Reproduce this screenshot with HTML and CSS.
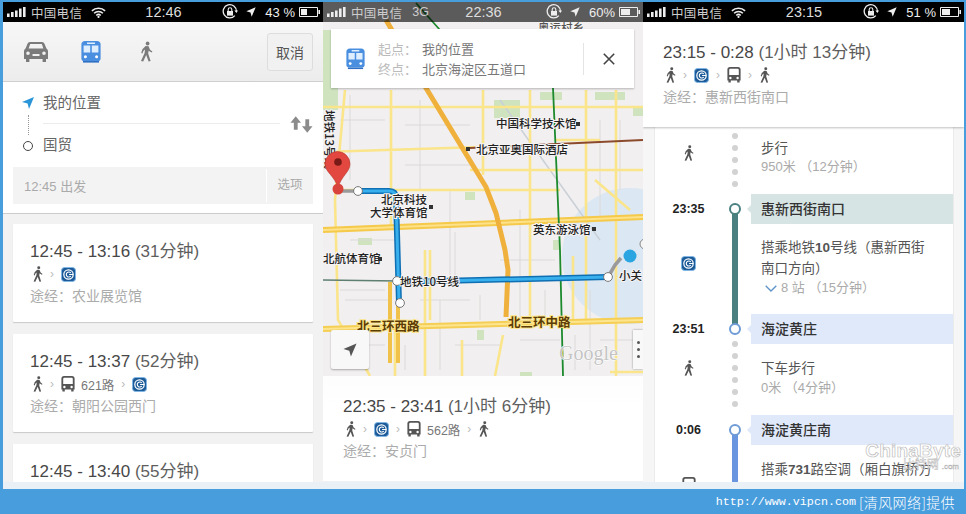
FILE: index.html
```html
<!DOCTYPE html>
<html lang="zh-CN">
<head>
<meta charset="utf-8">
<title>Google Maps transit</title>
<link rel="stylesheet" href="styles.css">
</head>
<body>
<svg class="defs" width="0" height="0">
  <symbol id="walk" viewBox="0 0 14 20"><circle cx="8.6" cy="2" r="1.9"/><path d="M6.6 4.6 9.6 4.8 11 8.2 13.4 10 12.6 11 9.6 9.2 9.2 12 11.6 19.6 9.6 20 7.2 13.4 4.2 20 2 19.4 5.6 11.6 6 8 4.4 9.4 3.4 12 2.2 11.4 3.4 7.8Z"/></symbol>
  <symbol id="bus" viewBox="0 0 14 16"><path fill-rule="evenodd" d="M3 0H11C12.6 0 13.6 1 13.6 2.4V13.4H12.6V15.6H10.2V13.6H3.8V15.6H1.4V13.4H.4V2.4C.4 1 1.4 0 3 0ZM2.2 3V8H11.8V3C11.8 2.2 11.2 1.7 10.4 1.7H3.6C2.8 1.7 2.2 2.2 2.2 3ZM3.4 9.8A1.2 1.2 0 1 0 3.4 12.2 1.2 1.2 0 1 0 3.4 9.8ZM10.6 9.8A1.2 1.2 0 1 0 10.6 12.2 1.2 1.2 0 1 0 10.6 9.8Z"/></symbol>
  <symbol id="metro" viewBox="0 0 16 16"><rect x=".5" y=".5" width="15" height="15" rx="3.5" fill="#1c5b98" stroke="#7fb6e6"/><circle cx="8" cy="8" r="5" fill="none" stroke="#fff" stroke-width="1.3"/><path d="M10.4 6.2A2.7 2.7 0 1 0 10.4 9.8M8.6 8H13" fill="none" stroke="#fff" stroke-width="1.2"/></symbol>
  <symbol id="train" viewBox="0 0 20 22"><path fill="#4a8ee0" d="M4 0H16C18.2 0 19.6 1.4 19.6 3.4V17.4C19.6 19 18.6 20 17 20H3C1.4 20 .4 19 .4 17.4V3.4C.4 1.4 1.8 0 4 0Z"/><path fill="#2f6fc4" d="M2 20H18V21.6H2Z"/><path fill="#dfeeff" d="M2.6 4.6H9.2V11.6H2.6ZM10.8 4.6H17.4V11.6H10.8ZM6 1.6H14V3H6Z"/><circle cx="4.4" cy="15.8" r="1.5" fill="#fff"/><circle cx="15.6" cy="15.8" r="1.5" fill="#fff"/></symbol>
  <symbol id="rotlock" viewBox="0 0 16 16"><path d="M12.8 11.6A6.6 6.6 0 1 1 14.4 7.4" fill="none" stroke="currentColor" stroke-width="1.3"/><path d="M12.4 6.6H16L14.4 9Z" fill="currentColor"/><path d="M5 7H11V11.6H5Z" fill="currentColor"/><path d="M6.2 7V5.6A1.8 1.8 0 0 1 9.8 5.6V7" fill="none" stroke="currentColor" stroke-width="1.1"/></symbol>
  <symbol id="locarrow" viewBox="0 0 12 12"><path d="M11.6.4 6.8 11.6 5.4 6.6.4 5.2Z" fill="currentColor"/></symbol>
  <symbol id="wifi" viewBox="0 0 16 12"><path d="M.8 4.2A10.4 10.4 0 0 1 15.2 4.2M3.2 6.8A7 7 0 0 1 12.8 6.8M5.6 9.2A3.4 3.4 0 0 1 10.4 9.2" fill="none" stroke="currentColor" stroke-width="1.7"/><circle cx="8" cy="10.8" r="1.2" fill="currentColor"/></symbol>
  <symbol id="signal" viewBox="0 0 19 10"><path fill="currentColor" d="M0 6.5H2.6V10H0ZM4 5H6.6V10H4ZM8 3.5H10.6V10H8ZM12 1.5H14.6V10H12ZM16 0H18.6V10H16Z"/></symbol>
  <symbol id="battery" viewBox="0 0 21 10"><path fill="none" stroke="currentColor" d="M.5.5H18.5V9.5H.5Z"/><path fill="currentColor" d="M19.4 3H21V7H19.4Z"/></symbol>
</svg>
<div class="page">
  <main class="screens">

    <section class="screen screen-one">
      <div class="status status-black">
        <div class="st-left"><svg class="ic-signal"><use href="#signal"/></svg><span class="carrier">中国电信</span><svg class="ic-wifi"><use href="#wifi"/></svg></div>
        <div class="st-time">12:46</div>
        <div class="st-right"><svg class="ic-lock"><use href="#rotlock"/></svg><svg class="ic-arrow"><use href="#locarrow"/></svg><span class="pct">43 %</span><span class="batt"><svg class="ic-batt"><use href="#battery"/></svg><i class="fill fill-43"></i></span></div>
      </div>
      <div class="toolbar">
        <svg class="ic-car" viewBox="0 0 24 20"><path fill="#7b7b7b" fill-rule="evenodd" d="M6 0H18C19.4 0 20 .8 20.6 2L22.4 6.6C23.4 7.4 24 8.2 24 9.6V17H22V20H18.6V17H5.4V20H2V17H0V9.6C0 8.2.6 7.4 1.6 6.6L3.4 2C4 .8 4.6 0 6 0ZM6.2 2 4.6 6.4H19.4L17.8 2ZM4 9.4A1.8 1.8 0 1 0 4 13 1.8 1.8 0 1 0 4 9.4ZM20 9.4A1.8 1.8 0 1 0 20 13 1.8 1.8 0 1 0 20 9.4ZM8.5 12V14H15.5V12Z"/></svg>
        <svg class="ic-train"><use href="#train"/></svg>
        <svg class="ic-walk-lg"><use href="#walk"/></svg>
        <button class="cancel">取消</button>
      </div>
      <div class="search">
        <div class="search-fields">
          <div class="marks">
            <svg class="ic-me" viewBox="0 0 12 12"><path d="M12 0 7 12 5.6 6.4 0 5Z"/></svg>
            <div class="dotted"></div>
            <div class="ring-small"></div>
          </div>
          <div class="places">
            <div class="place">我的位置</div>
            <div class="place place-last">国贸</div>
          </div>
          <svg class="ic-swap" viewBox="0 0 24 17"><path fill="#8b8b8b" d="M6 0 11.5 6.6H8V14H4V6.6H.5ZM18 17 12.5 10.4H16V3H20V10.4H23.5Z"/></svg>
        </div>
        <div class="depart"><span class="depart-time">12:45 出发</span><span class="depart-opt">选项</span></div>
      </div>
      <div class="cards">
        <article class="route card">
          <div class="r-time">12:45 - 13:16 <span class="r-dur">(31分钟)</span></div>
          <div class="r-icons"><svg class="i-walk"><use href="#walk"/></svg><span class="chev">›</span><svg class="i-metro"><use href="#metro"/></svg></div>
          <div class="r-via">途经：<span class="via-name">农业展览馆</span></div>
        </article>
        <article class="route card">
          <div class="r-time">12:45 - 13:37 <span class="r-dur">(52分钟)</span></div>
          <div class="r-icons"><svg class="i-walk"><use href="#walk"/></svg><span class="chev">›</span><svg class="i-bus"><use href="#bus"/></svg><span class="r-line">621路</span><span class="chev">›</span><svg class="i-metro"><use href="#metro"/></svg></div>
          <div class="r-via">途经：<span class="via-name">朝阳公园西门</span></div>
        </article>
        <article class="route card">
          <div class="r-time">12:45 - 13:40 <span class="r-dur">(55分钟)</span></div>
        </article>
      </div>
    </section>

    <section class="screen screen-two">
      <svg class="map" viewBox="323 0 320 376" width="320" height="376">
        <rect x="323" y="0" width="320" height="376" fill="#f1eff0"/>
        <g fill="#cfe3bf">
          <path d="M323 30H338V110H323ZM494 100H520V118H494ZM540 92H562V100H540ZM595 92H625V100H595ZM633 108H643V116H633ZM465 192H475V200H465ZM358 238H372V245H358ZM553 240H560V250H553ZM477 330H484V340H477ZM520 372H532V376H520Z"/>
        </g>
        <circle cx="630" cy="256" r="68" fill="#d7e5f2" opacity=".85"/>
        <g fill="none" stroke="#dcdad8" stroke-width="1">
          <path d="M340 120H385M350 95V180M420 100V190M450 190 V280M350 240H395M440 300V370M520 210V320M600 120V220M345 345H385M455 345H500M600 340H640M520 340H560M420 300H470M345 300H390M590 290V370M620 120V190M500 260H555M455 232V275M405 125H470M405 165H470M340 290 385 290M480 295V320M545 290V320M575 335V370M405 345V370"/>
        </g>
        <path d="M500 100 600 240" fill="none" stroke="#c9cfd6" stroke-width="1.5"/>
        <g fill="none" stroke="#fbe58a" stroke-width="2.6">
          <path d="M323 107H643M323 152 480 147M470 170H643M340 190H560M391 90V230M483 90V175M530 90V320M586 90V320M616 90V376M555 140 600 140M345 90 335 200 338 320 370 376M395 328V376M425 250V376M462 340V376M503 335 495 376M573 256V320M600 320H643M430 250V320M610 372H643M595 180 630 210"/>
        </g>
        <path d="M323 230 643 217" fill="none" stroke="#f5c94a" stroke-width="6"/>
        <path d="M323 230 643 217" fill="none" stroke="#fde28a" stroke-width="2"/>
        <path d="M323 329 643 320" fill="none" stroke="#f5cf55" stroke-width="6"/>
        <path d="M323 329 643 320" fill="none" stroke="#fde58f" stroke-width="2"/>
        <path d="M390 282V363M398 282V363" fill="none" stroke="#f0c24a" stroke-width="4"/>
        <path d="M386 20 426 88 486 187 496 213 505 250 508 270 506 317" fill="none" stroke="#efb03c" stroke-width="5"/>
        <path d="M416 3 440 30M553 88 560 250 563 376" fill="none" stroke="#1d8a2e" stroke-width="1.8"/>
        <path d="M470 148 643 140" fill="none" stroke="#8c4a2c" stroke-width="2"/>
        <path d="M323 280 398 281" fill="none" stroke="#5f7f70" stroke-width="1.6"/>
        <path d="M340 191H358M608 277 615 265 621 258" fill="none" stroke="#9a9a9a" stroke-width="3.5"/>
        <path d="M358 191H389Q396 191 396 198L399 303M398 282 608 277" fill="none" stroke="#0f6fb3" stroke-width="6"/>
        <path d="M358 191H389Q396 191 396 198L399 303M398 282 608 277" fill="none" stroke="#39b0ee" stroke-width="3"/>
        <g fill="#fff" stroke="#777" stroke-width="1">
          <circle cx="358" cy="191" r="4.4"/><circle cx="397" cy="281" r="4.4"/><circle cx="400" cy="303" r="4.4"/><circle cx="608" cy="277" r="4.4"/>
        </g>
        <circle cx="630" cy="256" r="6.5" fill="#2aa5e2"/>
        <circle cx="645" cy="244" r="5" fill="#f4f4f4" stroke="#888"/>
        <text class="lbl" x="496" y="128">中国科学技术馆</text>
        <text class="lbl" x="476" y="154">北京亚奥国际酒店</text>
        <text class="lbl" x="381" y="204">北京科技</text>
        <text class="lbl" x="370" y="217">大学体育馆</text>
        <text class="lbl" x="533" y="234">英东游泳馆</text>
        <text class="lbl" x="323" y="263">北航体育馆</text>
        <text class="lbl" x="400" y="286">地铁10号线</text>
        <text class="lbl" x="619" y="280">小关</text>
        <text class="lbl lbl-faint" x="538" y="32">奥运村乡</text>
        <text class="lbl" transform="translate(325 110) rotate(90)">地铁13号线</text>
        <g fill="#333"><rect x="576" y="122" width="4" height="4"/><rect x="466" y="147" width="4" height="4"/><rect x="429" y="205" width="4" height="4"/><rect x="592" y="227" width="4" height="4"/><rect x="378" y="257" width="4" height="4"/></g>
        <text class="lbl-road" x="357" y="331">北三环西路</text>
        <text class="lbl-road" x="508" y="327">北三环中路</text>
        <text class="google" x="559" y="360">Google</text>
        <path d="M338 188C335 176 325 172 325 164A12.5 12.5 0 0 1 350 164C350 172 341 176 338 188Z" fill="#e2483f" stroke="#b5302a" stroke-width=".6"/>
        <circle cx="338" cy="162" r="3.8" fill="#7a1a16"/>
        <circle cx="338" cy="189" r="5.5" fill="#d8443b"/>
      </svg>
      <div class="status status-glass">
        <div class="st-left"><svg class="ic-signal"><use href="#signal"/></svg><span class="carrier">中国电信</span><span class="net">3G</span></div>
        <div class="st-time">22:36</div>
        <div class="st-right"><svg class="ic-lock"><use href="#rotlock"/></svg><svg class="ic-arrow"><use href="#locarrow"/></svg><span class="pct">60%</span><span class="batt"><svg class="ic-batt"><use href="#battery"/></svg><i class="fill fill-60"></i></span></div>
      </div>
      <div class="map-card">
        <svg class="mc-train"><use href="#train"/></svg>
        <div class="mc-rows">
          <div class="mc-row"><span class="mc-key">起点：</span><span>我的位置</span></div>
          <div class="mc-row"><span class="mc-key">终点：</span><span>北京海淀区五道口</span></div>
        </div>
        <div class="mc-close"><svg class="ic-x" viewBox="0 0 12 12"><path d="M.8.8 11.2 11.2M11.2.8.8 11.2" stroke="#444" stroke-width="1.6" fill="none"/></svg></div>
      </div>
      <button class="loc-btn"><svg class="ic-loc"><use href="#locarrow"/></svg></button>
      <div class="more-btn"><i></i><i></i><i></i></div>
      <article class="route route-panel">
        <div class="r-time">22:35 - 23:41 <span class="r-dur">(1小时 6分钟)</span></div>
        <div class="r-icons"><svg class="i-walk"><use href="#walk"/></svg><span class="chev">›</span><svg class="i-metro"><use href="#metro"/></svg><span class="chev">›</span><svg class="i-bus"><use href="#bus"/></svg><span class="r-line">562路</span><span class="chev">›</span><svg class="i-walk"><use href="#walk"/></svg></div>
        <div class="r-via">途经：<span class="via-name">安贞门</span></div>
      </article>
    </section>

    <section class="screen screen-three">
      <div class="status status-black">
        <div class="st-left"><svg class="ic-signal"><use href="#signal"/></svg><span class="carrier">中国电信</span><svg class="ic-wifi"><use href="#wifi"/></svg></div>
        <div class="st-time">23:15</div>
        <div class="st-right"><svg class="ic-lock"><use href="#rotlock"/></svg><svg class="ic-arrow"><use href="#locarrow"/></svg><span class="pct">51 %</span><span class="batt"><svg class="ic-batt"><use href="#battery"/></svg><i class="fill fill-51"></i></span></div>
      </div>
      <article class="route route-head">
        <div class="r-time">23:15 - 0:28 <span class="r-dur">(1小时 13分钟)</span></div>
        <div class="r-icons"><svg class="i-walk"><use href="#walk"/></svg><span class="chev">›</span><svg class="i-metro"><use href="#metro"/></svg><span class="chev">›</span><svg class="i-bus"><use href="#bus"/></svg><span class="chev">›</span><svg class="i-walk"><use href="#walk"/></svg></div>
        <div class="r-via">途经：<span class="via-name">惠新西街南口</span></div>
      </article>
      <div class="steps">
        <div class="seg seg-walk seg-first">
          <div class="seg-side"><svg class="i-walk"><use href="#walk"/></svg></div>
          <div class="rail"><i></i><i></i><i></i><i></i><i></i></div>
          <div class="seg-body"><div class="s-title">步行</div><div class="s-sub">950米 （12分钟）</div></div>
        </div>
        <div class="seg seg-stop">
          <div class="seg-side stop-time">23:35</div>
          <div class="rail"><b class="node node-teal"></b></div>
          <div class="stop-name stop-teal">惠新西街南口</div>
        </div>
        <div class="seg seg-ride">
          <div class="seg-side"><svg class="i-metro"><use href="#metro"/></svg></div>
          <div class="rail"><span class="bar bar-teal"></span></div>
          <div class="seg-body"><div class="s-title">搭乘地铁<strong>10</strong>号线（惠新西街<br>南口方向）</div><div class="s-sub s-stops"><svg class="ic-down" viewBox="0 0 12 7"><path d="M.7.7 6 6 11.3.7" fill="none" stroke="#5b93c9" stroke-width="1.3"/></svg>8 站 （15分钟）</div></div>
        </div>
        <div class="seg seg-stop">
          <div class="seg-side stop-time">23:51</div>
          <div class="rail"><b class="node node-blue"></b></div>
          <div class="stop-name stop-blue">海淀黄庄</div>
        </div>
        <div class="seg seg-walk seg-second">
          <div class="seg-side"><svg class="i-walk"><use href="#walk"/></svg></div>
          <div class="rail"><i></i><i></i><i></i><i></i><i></i><i></i></div>
          <div class="seg-body"><div class="s-title">下车步行</div><div class="s-sub">0米 （4分钟）</div></div>
        </div>
        <div class="seg seg-stop">
          <div class="seg-side stop-time">0:06</div>
          <div class="rail"><b class="node node-blue"></b></div>
          <div class="stop-name stop-blue">海淀黄庄南</div>
        </div>
        <div class="seg seg-bus">
          <div class="seg-side"><svg class="i-bus"><use href="#bus"/></svg></div>
          <div class="rail"><span class="bar bar-blue"></span></div>
          <div class="seg-body"><div class="s-title">搭乘<strong>731</strong>路空调（厢白旗桥方</div></div>
        </div>
      </div>
      <div class="watermark"><span class="wm-main">ChinaByte</span><span class="wm-sub">比特网<small>.com</small></span></div>
    </section>
  </main>
  <div class="strip"></div>
  <footer class="foot"><span class="foot-url">http://www.vipcn.com</span><span class="foot-cn">[清风网络]提供</span></footer>
</div>
</body>
</html>
```

FILE: styles.css
```css
* { box-sizing: border-box; }
html, body { margin: 0; padding: 0; }
body { width: 966px; height: 514px; overflow: hidden; background: #489ddd; font-family: "Liberation Sans", "Noto Sans CJK SC", sans-serif; }
.defs { position: absolute; }
.page { display: flex; flex-direction: column; height: 514px; padding-top: 2px; }
.screens { display: flex; height: 480px; overflow: hidden; padding-left: 3px; padding-right: 2px; }
.strip { height: 7px; margin-left: 3px; margin-right: 2px; background: #e9f0f6; }
.foot { height: 25px; display: flex; align-items: center; justify-content: flex-end; padding-right: 11px; color: #fff; background: #489ddd; }
.foot-url { font: 11.7px "Liberation Mono", monospace; margin-right: 3px; }
.foot-cn { font: 300 14px "Noto Sans CJK SC", sans-serif; letter-spacing: .4px; }

.screen { position: relative; width: 320px; flex: none; overflow: hidden; }
.screen-one { background: #f2f2f2; }
.screen-three { width: 321px; background: #f6f6f6; }

/* status bar */
.status { height: 20px; display: grid; grid-template-columns: 1fr auto 1fr; align-items: center; color: #eee; font-size: 14px; padding: 0 3px 0 4px; position: relative; z-index: 3; }
.status-black { background: #000; }
.status-glass { background: rgba(0,0,0,.62); }
.st-left, .st-right { display: flex; align-items: center; }
.st-right { justify-content: flex-end; }
.st-time { font-size: 14.5px; font-weight: 400; color: #ddd; }
.ic-signal { width: 19px; height: 10px; }
.carrier { margin-left: 5px; font-size: 12.5px; letter-spacing: .3px; color: #ccc; }
.net { margin-left: 10px; font-size: 12.5px; color: #ccc; }
.ic-wifi { width: 15px; height: 11px; margin-left: 9px; }
.ic-lock { width: 16px; height: 16px; }
.ic-arrow { width: 10px; height: 10px; margin-left: 8px; }
.pct { margin-left: 9px; font-size: 13px; }
.batt { position: relative; width: 21px; height: 10px; margin-left: 4px; display: block; }
.ic-batt { width: 21px; height: 10px; display: block; }
.fill { position: absolute; left: 2px; top: 2px; height: 6px; background: #eee; }
.fill-43 { width: 6px; }
.fill-51 { width: 8px; }
.fill-60 { width: 9px; }

/* screen one */
.toolbar { height: 60px; display: flex; align-items: center; padding: 0 10px 0 21px; background: linear-gradient(#f7f7f7, #ececec); border-bottom: 1px solid #cfcfcf; }
.ic-car { width: 24px; height: 20px; }
.ic-train { width: 20px; height: 22px; margin-left: 33px; }
.ic-walk-lg { width: 14px; height: 21px; margin-left: 38px; fill: #7b7b7b; }
.cancel { margin-left: auto; width: 46px; height: 38px; padding: 0; border: 1px solid #ddd; border-radius: 3px; background: #f1f1f1; color: #555; font: 14px "Noto Sans CJK SC", sans-serif; }
.search { height: 132px; background: #fff; padding: 0 10px 0 10px; border-bottom: 1px solid #ccc; display: flex; flex-direction: column; }
.search-fields { height: 85px; display: flex; align-items: center; }
.marks { width: 30px; height: 85px; display: flex; flex-direction: column; align-items: center; padding: 15px 0 0 0; }
.ic-me { width: 12px; height: 12px; fill: #2a95d8; }
.dotted { width: 0; height: 20px; margin-top: 6px; border-left: 1px dotted #999; }
.ring-small { width: 10px; height: 10px; margin-top: 6px; border: 1.6px solid #444; border-radius: 50%; }
.places { flex: none; width: 237px; height: 85px; padding-top: 9px; }
.place { height: 33px; line-height: 24px; font-size: 14.5px; color: #666; border-bottom: 1px solid #ececec; padding-bottom: 9px; }
.place-last { border-bottom: 0; padding-top: 9px; height: 42px; line-height: 24px; }
.ic-swap { width: 23px; height: 17px; margin-left: 10px; }
.depart { height: 37px; display: flex; align-items: center; background: #f3f3f3; color: #aaa; font-size: 13px; }
.depart-time { padding-left: 11px; flex: 1; }
.depart-opt { width: 47px; height: 33px; line-height: 33px; text-align: center; border-left: 1px solid #fff; color: #aaa; font-size: 12.5px; }
.cards { padding: 10px 10px 0; display: flex; flex-direction: column; gap: 12px; }
.card { background: #fff; box-shadow: 0 1px 1px #c9c9c9; padding: 16px 17px 14px; border-radius: 1px; height: 98px; flex: none; }

/* route summary */
.r-time { height: 24px; line-height: 24px; font-size: 17px; color: #474747; white-space: nowrap; }
.r-dur { color: #5e5e5e; }
.r-icons { height: 20px; display: flex; align-items: center; padding-left: 2px; }
.i-walk { width: 11px; height: 16px; fill: #555; flex: none; }
.i-metro { width: 15px; height: 15px; flex: none; }
.i-bus { width: 14px; height: 16px; fill: #555; flex: none; }
.chev { width: 18px; text-align: center; color: #bbb; font-size: 12px; line-height: 16px; flex: none; }
.r-line { margin-left: 6px; font-size: 12.5px; color: #777; }
.r-via { height: 24px; line-height: 24px; font-size: 14px; color: #ababab; white-space: nowrap; }

/* screen two */
.screen-two { background: #f1eff0; }
.map { position: absolute; left: 0; top: -2px; display: block; }
.lbl { font: 500 11.5px "Noto Sans CJK SC", sans-serif; fill: #222; stroke: #f5f3f3; stroke-width: 2px; paint-order: stroke; }
.lbl-faint { fill: #555; }
.lbl-road { font: 700 12.5px "Noto Sans CJK SC", sans-serif; fill: #5c3b05; stroke: #fbe58a; stroke-width: 2px; paint-order: stroke; }
.google { font: 20px "Liberation Serif", serif; fill: #c4c4c4; stroke: #fff; stroke-width: 1px; paint-order: stroke; }
.map-card { position: absolute; left: 8px; top: 27px; width: 303px; height: 59px; background: #fff; box-shadow: 0 1px 2px rgba(0,0,0,.25); display: flex; align-items: center; z-index: 2; }
.mc-train { width: 19px; height: 22px; margin-left: 15px; flex: none; }
.mc-rows { margin-left: 13px; padding-top: 3px; flex: 1; font-size: 13px; color: #777; }
.mc-row { height: 20px; line-height: 20px; display: flex; }
.mc-key { width: 44px; color: #bbb; }
.mc-close { width: 51px; height: 32px; border-left: 1px solid #e4e4e4; display: flex; align-items: center; justify-content: center; }
.ic-x { width: 12px; height: 12px; }
.loc-btn { position: absolute; left: 8px; top: 328px; width: 38px; height: 39px; padding: 0; border: 0; border-radius: 2px; background: #f8f8f8; box-shadow: 0 1px 2px rgba(0,0,0,.3); display: flex; align-items: center; justify-content: center; color: #555; }
.ic-loc { width: 14px; height: 14px; }
.more-btn { position: absolute; right: 0; top: 328px; width: 10px; height: 39px; background: #f8f8f8; box-shadow: 0 0 2px rgba(0,0,0,.4); display: flex; flex-direction: column; gap: 4px; align-items: center; justify-content: center; }
.more-btn i { width: 3px; height: 3px; border-radius: 50%; background: #555; }
.route-panel { position: absolute; left: 0; top: 374px; width: 320px; height: 106px; padding: 19px 20px 0; background: linear-gradient(rgba(255,255,255,.88), #fff 30px); border-bottom: 1px solid #eef0f2; }

/* screen three */
.route-head { height: 105px; padding: 19px 20px 0; background: #fff; box-shadow: 0 1px 2px rgba(0,0,0,.25); position: relative; z-index: 1; }
.steps { margin-left: 11px; width: 300px; height: 355px; background: #fff; border-left: 1px solid #ebebeb; border-right: 1px solid #ebebeb; overflow: hidden; }
.seg { display: grid; grid-template-columns: 67px 26px 205px; }
.seg-first { height: 67px; }
.seg-second { height: 71px; }
.seg-stop { height: 30px; }
.seg-ride { height: 90px; }
.seg-bus { height: 60px; }
.seg-side { display: flex; align-items: center; justify-content: center; }
.seg-first .seg-side { align-items: flex-start; padding-top: 18px; }
.seg-second .seg-side { align-items: flex-start; padding-top: 16px; }
.seg-ride .seg-side { align-items: flex-start; padding-top: 32px; }
.seg-bus .seg-side { align-items: flex-start; padding-top: 32px; }
.stop-time { font-size: 12.5px; font-weight: 700; color: #222; }
.rail { display: flex; flex-direction: column; align-items: center; }
.rail i { width: 6px; height: 6px; border-radius: 50%; background: #d2d2d2; margin-bottom: 6px; flex: none; }
.seg-first .rail { padding-top: 6px; }
.seg-second .rail { margin-top: -3px; }
.node { position: relative; z-index: 1; width: 12px; height: 12px; margin-top: 9px; border-radius: 50%; background: #fff; border: 2px solid #4a8080; }
.node-blue { border-color: #6f9bd6; }
.bar { flex: none; width: 6px; height: calc(100% + 20px); display: block; margin-top: -10px; }
.bar-teal { background: #4a8080; }
.bar-blue { background: #6a96e0; }
.stop-name { margin-left: 3px; padding-left: 10px; line-height: 30px; font-size: 14px; color: #333; font-weight: 500; position: relative; }
.stop-name::before { content: ""; position: absolute; left: -4px; top: 11px; border: 4px solid transparent; border-left: 0; }
.stop-teal { background: #d7e4e4; }
.stop-teal::before { border-right-color: #d7e4e4; }
.stop-blue { background: #dfe9fa; }
.stop-blue::before { border-right-color: #dfe9fa; }
.seg-body { padding-left: 13px; }
.seg-first .seg-body { padding-top: 13px; }
.seg-second .seg-body { padding-top: 15px; }
.seg-ride .seg-body { padding-top: 13px; }
.seg-bus .seg-body { padding-top: 14px; }
.s-title { font-size: 13.5px; line-height: 21px; color: #555; white-space: nowrap; }
.seg-second .s-title { line-height: 20px; }
.seg-first .s-title { line-height: 18px; }
.s-sub { font-size: 13px; line-height: 18px; color: #aaa; white-space: nowrap; }
.s-stops { display: flex; align-items: center; padding-left: 4px; }
.ic-down { width: 12px; height: 7px; margin-right: 4px; }
.watermark { position: absolute; left: 224px; top: 439px; width: 94px; display: flex; flex-direction: column; align-items: flex-end; color: rgba(255,255,255,.9); line-height: 1; pointer-events: none; z-index: 2; }
.wm-main { font-size: 19px; font-weight: 700; -webkit-text-stroke: .7px #bdbdbd; letter-spacing: .2px; }
.wm-sub { font-size: 12px; line-height: 11px; -webkit-text-stroke: .4px #aaa; margin-right: 2px; }
.wm-sub small { font-size: 8px; margin-left: 3px; }
```
